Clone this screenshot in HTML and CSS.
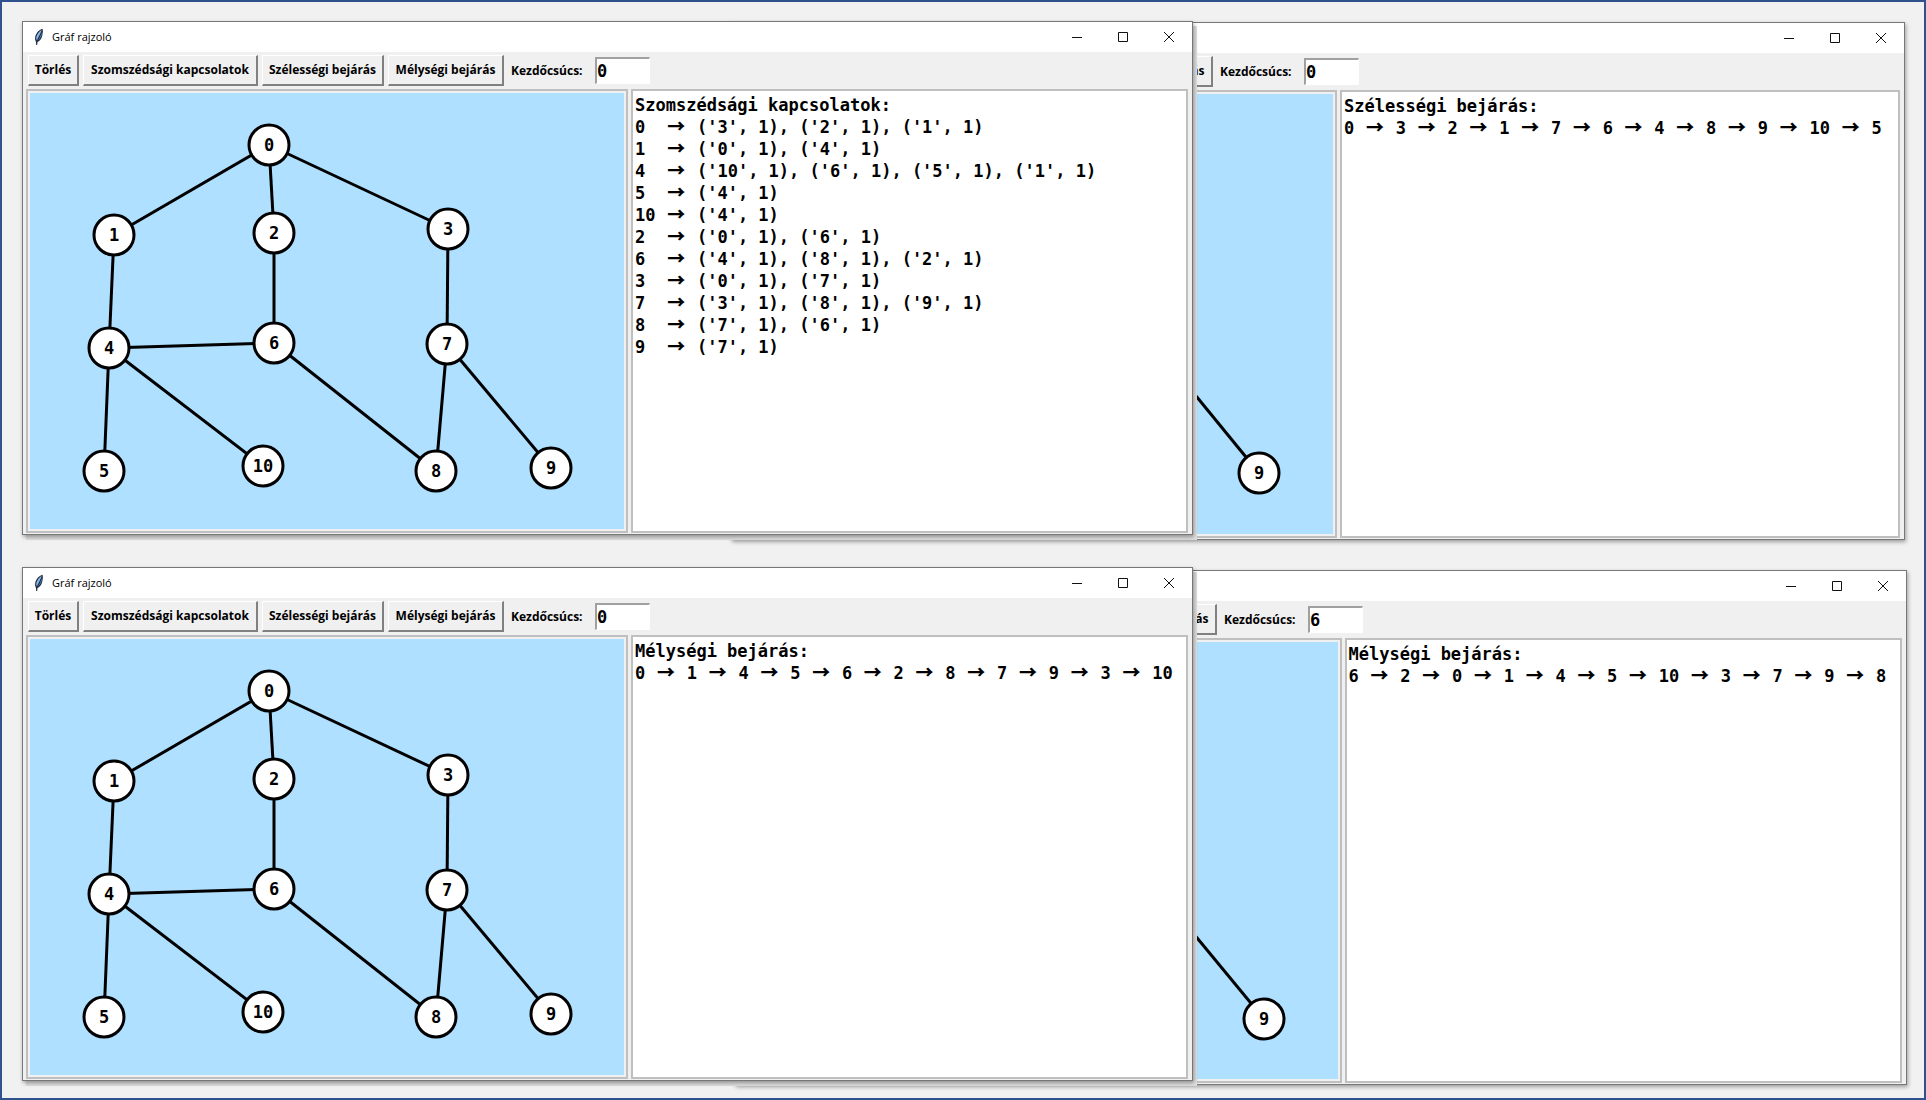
FILE: index.html
```html
<!DOCTYPE html>
<html lang="hu">
<head>
<meta charset="utf-8">
<title>Gráf rajzoló</title>
<link rel="stylesheet" href="styles.css">
</head>
<body>
<svg class="sprite" aria-hidden="true">
  <symbol id="minimize" viewBox="0 0 12 12"><path d="M1 6.500H11" fill="none" stroke="#111"/></symbol>
  <symbol id="maximize" viewBox="0 0 12 12"><path d="M1.500 1.500H10.500V10.500H1.500Z" fill="none" stroke="#111"/></symbol>
  <symbol id="close" viewBox="0 0 12 12"><path d="M1 1L11 11M11 1L1 11" fill="none" stroke="#111"/></symbol>
  <symbol id="feather" viewBox="0 0 12 18">
    <path d="M9.500 .8C6 2 3 5 2.200 9C1.900 11 2.200 12.500 3 14L3.200 17L4.200 17L4.500 14C7 13 8.700 10.500 9.300 7.500C9.800 5 10.200 2.500 9.500 .8Z" fill="#1d2b3f"/>
    <path d="M8.800 1.800C6 3.500 3.800 6.500 3.100 10L3.800 12.500C5.500 9 7.500 5.500 8.800 1.800Z" fill="#8db9ea"/>
    <path d="M8.900 3.600C8 7 6.800 10 4.700 12.600C6.800 11.400 8.200 9 8.700 7Z" fill="#4d80bf"/>
  </symbol>
</svg>

<main class="desktop">

  <section class="window window--behind window--top-right" aria-label="Gráf rajzoló – szélességi bejárás">
    <header class="titlebar">
      <div class="controls">
        <button type="button" aria-label="Kis méret"><svg><use href="#minimize"/></svg></button>
        <button type="button" aria-label="Teljes méret"><svg><use href="#maximize"/></svg></button>
        <button type="button" aria-label="Bezárás"><svg><use href="#close"/></svg></button>
      </div>
    </header>
    <div class="toolbar">
      <button class="tool tool--last" type="button">Mélységi bejárás</button>
      <label for="start-2">Kezdőcsúcs:</label>
      <input id="start-2" class="entry" type="text" value="0">
    </div>
    <div class="panes">
      <svg class="graph">
        <g class="edges"><line x1="417" y1="253" x2="520" y2="379"/></g>
        <g class="nodes"><circle cx="520" cy="379" r="20"/></g>
        <g class="names"><text x="520" y="385">9</text></g>
      </svg>
      <pre class="output">Szélességi bejárás:
0 <i>→</i> 3 <i>→</i> 2 <i>→</i> 1 <i>→</i> 7 <i>→</i> 6 <i>→</i> 4 <i>→</i> 8 <i>→</i> 9 <i>→</i> 10 <i>→</i> 5</pre>
    </div>
  </section>

  <section class="window window--behind window--bottom-right" aria-label="Gráf rajzoló – mélységi bejárás a 6-os csúcsból">
    <header class="titlebar">
      <div class="controls">
        <button type="button" aria-label="Kis méret"><svg><use href="#minimize"/></svg></button>
        <button type="button" aria-label="Teljes méret"><svg><use href="#maximize"/></svg></button>
        <button type="button" aria-label="Bezárás"><svg><use href="#close"/></svg></button>
      </div>
    </header>
    <div class="toolbar">
      <button class="tool tool--last" type="button">Mélységi bejárás</button>
      <label for="start-4">Kezdőcsúcs:</label>
      <input id="start-4" class="entry" type="text" value="6">
    </div>
    <div class="panes">
      <svg class="graph">
        <g class="edges"><line x1="417" y1="251" x2="521" y2="377"/></g>
        <g class="nodes"><circle cx="521" cy="377" r="20"/></g>
        <g class="names"><text x="521" y="383">9</text></g>
      </svg>
      <pre class="output">Mélységi bejárás:
6 <i>→</i> 2 <i>→</i> 0 <i>→</i> 1 <i>→</i> 4 <i>→</i> 5 <i>→</i> 10 <i>→</i> 3 <i>→</i> 7 <i>→</i> 9 <i>→</i> 8</pre>
    </div>
  </section>

  <section class="window window--top-left" aria-label="Gráf rajzoló – szomszédsági kapcsolatok">
    <header class="titlebar">
      <svg class="app-icon"><use href="#feather"/></svg>
      <h1>Gráf rajzoló</h1>
      <div class="controls">
        <button type="button" aria-label="Kis méret"><svg><use href="#minimize"/></svg></button>
        <button type="button" aria-label="Teljes méret"><svg><use href="#maximize"/></svg></button>
        <button type="button" aria-label="Bezárás"><svg><use href="#close"/></svg></button>
      </div>
    </header>
    <div class="toolbar">
      <button class="tool" type="button">Törlés</button>
      <button class="tool" type="button">Szomszédsági kapcsolatok</button>
      <button class="tool" type="button">Szélességi bejárás</button>
      <button class="tool" type="button">Mélységi bejárás</button>
      <label for="start-1">Kezdőcsúcs:</label>
      <input id="start-1" class="entry" type="text" value="0">
    </div>
    <div class="panes">
      <svg class="graph">
        <g class="edges">
          <line x1="239" y1="52" x2="84" y2="142"/><line x1="239" y1="52" x2="244" y2="140"/><line x1="239" y1="52" x2="418" y2="136"/>
          <line x1="84" y1="142" x2="79" y2="255"/><line x1="244" y1="140" x2="244" y2="250"/><line x1="418" y1="136" x2="417" y2="251"/>
          <line x1="79" y1="255" x2="244" y2="250"/><line x1="79" y1="255" x2="74" y2="378"/><line x1="79" y1="255" x2="233" y2="373"/>
          <line x1="244" y1="250" x2="406" y2="378"/><line x1="417" y1="251" x2="406" y2="378"/><line x1="417" y1="251" x2="521" y2="375"/>
        </g>
        <g class="nodes">
          <circle cx="239" cy="52" r="20"/><circle cx="84" cy="142" r="20"/><circle cx="244" cy="140" r="20"/><circle cx="418" cy="136" r="20"/>
          <circle cx="79" cy="255" r="20"/><circle cx="244" cy="250" r="20"/><circle cx="417" cy="251" r="20"/>
          <circle cx="74" cy="378" r="20"/><circle cx="233" cy="373" r="20"/><circle cx="406" cy="378" r="20"/><circle cx="521" cy="375" r="20"/>
        </g>
        <g class="names">
          <text x="239" y="58">0</text><text x="84" y="148">1</text><text x="244" y="146">2</text><text x="418" y="142">3</text>
          <text x="79" y="261">4</text><text x="244" y="256">6</text><text x="417" y="257">7</text>
          <text x="74" y="384">5</text><text x="233" y="379">10</text><text x="406" y="384">8</text><text x="521" y="381">9</text>
        </g>
      </svg>
      <pre class="output">Szomszédsági kapcsolatok:
0  <i>→</i> ('3', 1), ('2', 1), ('1', 1)
1  <i>→</i> ('0', 1), ('4', 1)
4  <i>→</i> ('10', 1), ('6', 1), ('5', 1), ('1', 1)
5  <i>→</i> ('4', 1)
10 <i>→</i> ('4', 1)
2  <i>→</i> ('0', 1), ('6', 1)
6  <i>→</i> ('4', 1), ('8', 1), ('2', 1)
3  <i>→</i> ('0', 1), ('7', 1)
7  <i>→</i> ('3', 1), ('8', 1), ('9', 1)
8  <i>→</i> ('7', 1), ('6', 1)
9  <i>→</i> ('7', 1)</pre>
    </div>
  </section>

  <section class="window window--bottom-left" aria-label="Gráf rajzoló – mélységi bejárás a 0-s csúcsból">
    <header class="titlebar">
      <svg class="app-icon"><use href="#feather"/></svg>
      <h1>Gráf rajzoló</h1>
      <div class="controls">
        <button type="button" aria-label="Kis méret"><svg><use href="#minimize"/></svg></button>
        <button type="button" aria-label="Teljes méret"><svg><use href="#maximize"/></svg></button>
        <button type="button" aria-label="Bezárás"><svg><use href="#close"/></svg></button>
      </div>
    </header>
    <div class="toolbar">
      <button class="tool" type="button">Törlés</button>
      <button class="tool" type="button">Szomszédsági kapcsolatok</button>
      <button class="tool" type="button">Szélességi bejárás</button>
      <button class="tool" type="button">Mélységi bejárás</button>
      <label for="start-3">Kezdőcsúcs:</label>
      <input id="start-3" class="entry" type="text" value="0">
    </div>
    <div class="panes">
      <svg class="graph">
        <g class="edges">
          <line x1="239" y1="52" x2="84" y2="142"/><line x1="239" y1="52" x2="244" y2="140"/><line x1="239" y1="52" x2="418" y2="136"/>
          <line x1="84" y1="142" x2="79" y2="255"/><line x1="244" y1="140" x2="244" y2="250"/><line x1="418" y1="136" x2="417" y2="251"/>
          <line x1="79" y1="255" x2="244" y2="250"/><line x1="79" y1="255" x2="74" y2="378"/><line x1="79" y1="255" x2="233" y2="373"/>
          <line x1="244" y1="250" x2="406" y2="378"/><line x1="417" y1="251" x2="406" y2="378"/><line x1="417" y1="251" x2="521" y2="375"/>
        </g>
        <g class="nodes">
          <circle cx="239" cy="52" r="20"/><circle cx="84" cy="142" r="20"/><circle cx="244" cy="140" r="20"/><circle cx="418" cy="136" r="20"/>
          <circle cx="79" cy="255" r="20"/><circle cx="244" cy="250" r="20"/><circle cx="417" cy="251" r="20"/>
          <circle cx="74" cy="378" r="20"/><circle cx="233" cy="373" r="20"/><circle cx="406" cy="378" r="20"/><circle cx="521" cy="375" r="20"/>
        </g>
        <g class="names">
          <text x="239" y="58">0</text><text x="84" y="148">1</text><text x="244" y="146">2</text><text x="418" y="142">3</text>
          <text x="79" y="261">4</text><text x="244" y="256">6</text><text x="417" y="257">7</text>
          <text x="74" y="384">5</text><text x="233" y="379">10</text><text x="406" y="384">8</text><text x="521" y="381">9</text>
        </g>
      </svg>
      <pre class="output">Mélységi bejárás:
0 <i>→</i> 1 <i>→</i> 4 <i>→</i> 5 <i>→</i> 6 <i>→</i> 2 <i>→</i> 8 <i>→</i> 7 <i>→</i> 9 <i>→</i> 3 <i>→</i> 10</pre>
    </div>
  </section>

</main>
</body>
</html>
```
FILE: styles.css
```css
* { box-sizing: border-box; }

body {
  margin: 0;
  font-family: "Open Sans", "Noto Sans", sans-serif;
  color: #000;
}

.sprite { position: absolute; width: 0; height: 0; }

/* Two rows of windows; the left one of each row overlaps the right one. */
.desktop {
  display: grid;
  grid-template-columns: 709fr 462fr 712fr;
  grid-template-rows: 1fr 1fr;
  row-gap: 32px;
  min-height: 100vh;
  padding: 19px 19px 17px 20px;
  border: 2px solid #2f528f;
  background: #f1f1f1;
}

.window {
  display: flex;
  flex-direction: column;
  min-width: 0;
  border: 1px solid #777;
  background: #f0f0f0;
  box-shadow: 1px 2px 4px rgba(0, 0, 0, .35), 4px 5px 0 #dedede;
}

.window--top-left { grid-area: 1 / 1 / 2 / 3; }
.window--bottom-left { grid-area: 2 / 1 / 3 / 3; }
.window--top-right { grid-area: 1 / 2 / 2 / 4; margin: 1px 0 -5px; }
.window--bottom-right { grid-area: 2 / 2 / 3 / 4; margin: 3px -2px -4px 4px; }
.window--behind { box-shadow: 1px 2px 4px rgba(0, 0, 0, .35); }

.titlebar {
  display: flex;
  align-items: center;
  height: 30px;
  padding-left: 10px;
  background: #fff;
}
.app-icon { width: 12px; height: 18px; }
.titlebar h1 {
  margin: 0 0 0 7px;
  font-size: 11px;
  font-weight: 400;
  line-height: 18px;
}
.controls { display: flex; height: 100%; margin-left: auto; }
.controls button {
  display: grid;
  place-items: center;
  width: 46px;
  padding: 0;
  border: 0;
  background: none;
}
.controls svg { width: 12px; height: 12px; }

.toolbar {
  display: grid;
  grid-template-columns: 51px 175px 122px 116px 83px 55px;
  justify-content: start;
  align-items: center;
  column-gap: 4px;
  height: 37px;
  padding: 0 5px;
  font-size: 12px;
  font-weight: 700;
  line-height: 18px;
  white-space: nowrap;
}
.tool {
  height: 31px;
  padding: 0;
  border: solid;
  border-width: 1px 2px 2px 1px;
  border-color: #fff #808080 #808080 #fff;
  background: #f0f0f0;
  color: #000;
  font: inherit;
}
.tool--last { grid-column: 4; }
.toolbar label { padding-left: 3px; }
.entry {
  width: 55px;
  height: 27px;
  padding: 0;
  border: solid;
  border-width: 2px 1px 1px 2px;
  border-color: #a0a0a0 #fff #fff #a0a0a0;
  border-radius: 0;
  background: #fff;
  color: #000;
  font: 700 17px/22px "DejaVu Sans Mono", monospace;
}

.panes {
  display: grid;
  grid-template-columns: 602fr 557fr;
  column-gap: 3px;
  flex: 1;
  padding: 0 4px 1px 3px;
}
.window--top-right .panes { grid-template-columns: 601fr 559fr; }
.graph {
  width: 100%;
  height: 100%;
  min-height: 420px;
  padding: 2px;
  border: 2px solid #bfbfbf;
  background: #b0e0ff content-box;
  overflow: hidden;
}
.edges { stroke: #000; stroke-width: 3px; }
.nodes { fill: #fff; stroke: #000; stroke-width: 3px; }
.names {
  font: 700 17px "DejaVu Sans Mono", monospace;
  text-anchor: middle;
}

.output {
  margin: 0;
  padding: 3px 2px;
  border: 2px solid #bfbfbf;
  background: #fff;
  font: 700 17px/22px "DejaVu Sans Mono", monospace;
}
.output i {
  display: inline-block;
  width: 21px;
  height: 18px;
  font: 900 18px/18px "Noto Sans CJK JP", sans-serif;
  text-align: center;
  vertical-align: top;
}
```
